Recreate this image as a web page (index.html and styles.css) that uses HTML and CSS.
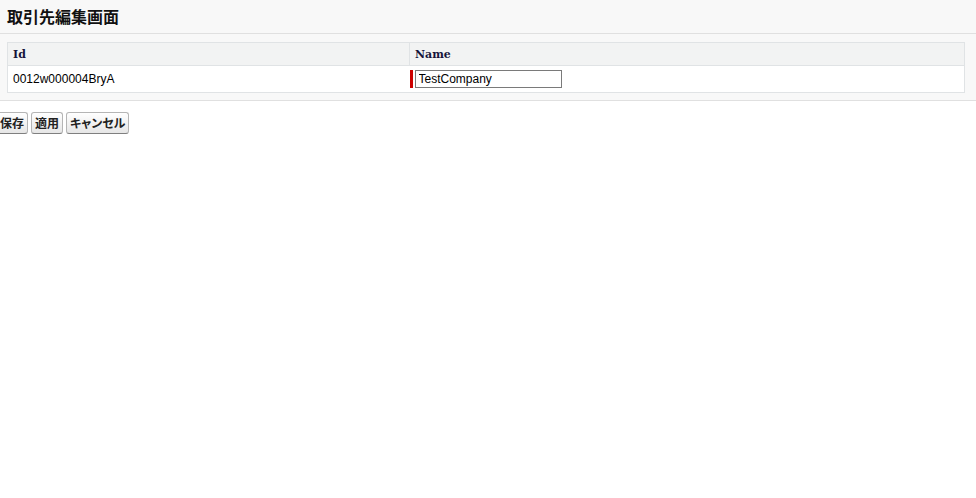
FILE: index.html
```html
<!DOCTYPE html>
<html lang="ja">
<head>
    <meta charset="UTF-8">
    <title>取引先編集画面</title>
    <link rel="stylesheet" href="styles.css">
</head>
<body>
    <div class="page-header">
        <h2>取引先編集画面</h2>
    </div>
    <div class="page-block">
        <table class="list">
            <tr>
                <th class="col-id">Id</th>
                <th>Name</th>
            </tr>
            <tr>
                <td class="col-id">0012w000004BryA</td>
                <td>
                    <div class="required-input">
                        <span class="required-bar"></span>
                        <input type="text" value="TestCompany">
                    </div>
                </td>
            </tr>
        </table>
    </div>
    <div class="buttons">
        <button class="btn">保存</button>
        <button class="btn">適用</button>
        <button class="btn">キャンセル</button>
    </div>
</body>
</html>
```

FILE: styles.css
```css
body {
    margin: 0;
    font-family: "Liberation Sans", Arial, "Noto Sans CJK JP", sans-serif;
    font-size: 12px;
    color: #000;
    background-color: white;
}
.page-header {
    height: 34px;
    background-color: #f8f8f8;
    border-bottom: 1px solid #e0e0e0;
    box-sizing: border-box;
    display: flex;
    align-items: center;
    padding-left: 7px;
}
.page-header h2 {
    margin: 0;
    font-family: "Noto Sans CJK JP", sans-serif;
    font-size: 16px;
    font-weight: bold;
    color: #111;
    line-height: 1;
    padding-bottom: 2px;
}
.page-block {
    background-color: #f8f8f8;
    padding: 8px 11px 7px 7px;
    border-bottom: 1px solid #e0e0e0;
}
.list {
    width: 100%;
    border-collapse: collapse;
    background-color: white;
    border: 1px solid #e0e3e5;
}
.list th, .list td {
    text-align: left;
    padding: 0 5px;
    vertical-align: middle;
}
.list th {
    height: 22px;
    background-color: #f2f3f3;
    border-bottom: 1px solid #e0e3e5;
    border-left: 1px solid #e0e3e5;
    font-family: "DejaVu Serif", serif;
    font-size: 11px;
    font-weight: bold;
    color: #15133a;
}
.list td {
    height: 26px;
}
.list .col-id {
    width: 391px;
    border-left: none;
}
.list td + td {
    padding-left: 0;
}
.required-input {
    display: flex;
    align-items: stretch;
    height: 18px;
}
.required-bar {
    width: 3px;
    background-color: #c00;
    margin-right: 2px;
}
.required-input input {
    width: 147px;
    height: 18px;
    box-sizing: border-box;
    border: 1px solid #7a7a7a;
    padding: 0 3px;
    font-family: "Liberation Sans", Arial, sans-serif;
    font-size: 12px;
    color: #000;
    margin: 0;
}
.buttons {
    display: flex;
    gap: 3px;
    margin: 11px 0 0 -4px;
}
.btn {
    height: 22px;
    padding: 0 3px;
    margin: 0;
    border: 1px solid #b5b5b5;
    border-bottom-color: #7f7f7f;
    border-radius: 3px;
    background: linear-gradient(#ffffff, #e6e6e6);
    font-family: "Noto Sans CJK JP", sans-serif;
    font-feature-settings: "palt";
    font-size: 12px;
    font-weight: bold;
    color: #222;
    line-height: 1;
    cursor: pointer;
}
```
